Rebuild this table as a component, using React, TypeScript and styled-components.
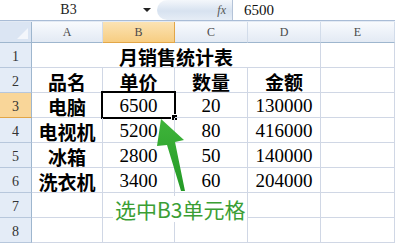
import React from 'react'
import styled, { createGlobalStyle } from 'styled-components'

const GlobalStyle = createGlobalStyle`
  html, body {
    margin: 0;
    padding: 0;
    background: #ffffff;
    overflow: hidden;
  }
`

const COLS = ['A', 'B', 'C', 'D', 'E']
const CN = `'Noto Sans CJK SC', 'Noto Sans', sans-serif`
const NUM = `'Liberation Serif', 'Noto Sans CJK SC', serif`

const rows: { name: string; price: string; qty: string; total: string }[] = [
  { name: '电脑', price: '6500', qty: '20', total: '130000' },
  { name: '电视机', price: '5200', qty: '80', total: '416000' },
  { name: '冰箱', price: '2800', qty: '50', total: '140000' },
  { name: '洗衣机', price: '3400', qty: '60', total: '204000' },
]

const Window = styled.div`
  position: relative;
  width: 395px;
  height: 245px;
  overflow: hidden;
  background: #ffffff;
`

const FormulaBar = styled.div`
  display: flex;
  height: 20px;
  border-bottom: 1px solid #a9bcd6;
  background: #ffffff;
`

const NameBox = styled.div`
  position: relative;
  width: 157px;
  display: flex;
  align-items: center;
  justify-content: center;
  padding-right: 20px;
  box-sizing: border-box;
  font: 14px ${NUM};
  color: #222;
`

const DropArrow = styled.span`
  position: absolute;
  right: 6px;
  top: 8px;
  width: 0;
  height: 0;
  border-left: 4px solid transparent;
  border-right: 4px solid transparent;
  border-top: 4px solid #222;
`

const FxButton = styled.div`
  width: 76px;
  display: flex;
  align-items: center;
  justify-content: flex-end;
  padding-right: 6px;
  box-sizing: border-box;
  border-radius: 10px 0 0 10px;
  background: linear-gradient(#f4f7fb, #d7e2f0 55%, #e6edf6);
  border-right: 1px solid #b4c3d8;
  font: italic 12px ${NUM};
  color: #555;
`

const FormulaInput = styled.div`
  flex: 1;
  display: flex;
  align-items: center;
  padding-left: 11px;
  font: 15px ${NUM};
  color: #111;
`

const Gap = styled.div`
  height: 1px;
  background: #e3eaf4;
`

const Sheet = styled.div`
  display: grid;
  grid-template-columns: 32px 71px 72px 73px 73px 74px;
  grid-template-rows: 21px;
  grid-auto-rows: 25px;
`

const Corner = styled.div`
  position: relative;
  background: #dbe5f3;
  border-right: 1px solid #9eb6ce;
  border-bottom: 1px solid #9eb6ce;
  box-sizing: border-box;
  &::after {
    content: '';
    position: absolute;
    right: 3px;
    bottom: 3px;
    border-left: 11px solid transparent;
    border-bottom: 11px solid #f3f6fb;
  }
`

const ColHead = styled.div<{ $active?: boolean }>`
  display: flex;
  align-items: center;
  justify-content: center;
  box-sizing: border-box;
  border-right: 1px solid ${({ $active }) => ($active ? '#e2a648' : '#d2dcea')};
  border-bottom: 1px solid ${({ $active }) => ($active ? '#e2a648' : '#9eb6ce')};
  background: ${({ $active }) =>
    $active ? 'linear-gradient(#fbe3b4, #f7cd82)' : 'linear-gradient(#f8fafd, #e3eaf4)'};
  font: 12px ${NUM};
  color: #4a4a4a;
`

const RowHead = styled.div<{ $active?: boolean }>`
  display: flex;
  align-items: center;
  justify-content: center;
  padding-top: 3px;
  box-sizing: border-box;
  border-right: 1px solid #9eb6ce;
  border-bottom: 1px solid ${({ $active }) => ($active ? '#e2a648' : '#b7c7dc')};
  background: ${({ $active }) => ($active ? '#f9d699' : '#e4ecf7')};
  font: 14px ${NUM};
  color: #333;
`

const Cell = styled.div<{ $span?: number; $bold?: boolean; $num?: boolean }>`
  position: relative;
  grid-column: span ${({ $span }) => $span ?? 1};
  display: flex;
  align-items: center;
  justify-content: center;
  padding-top: 2px;
  box-sizing: border-box;
  border-right: 1px solid #d0d7e5;
  border-bottom: 1px solid #d0d7e5;
  font-family: ${({ $num }) => ($num ? NUM : CN)};
  font-size: ${({ $num }) => ($num ? '19px' : '19px')};
  font-weight: ${({ $bold }) => ($bold ? 700 : 400)};
  color: #000;
  white-space: nowrap;
`

const Selection = styled.div`
  position: absolute;
  left: -2px;
  top: -2px;
  right: -2px;
  bottom: -2px;
  border: 2px solid #000;
  pointer-events: none;
  &::after {
    content: '';
    position: absolute;
    right: -4px;
    bottom: -4px;
    width: 5px;
    height: 5px;
    background: #000;
    border: 1px solid #fff;
  }
`

const Callout = styled.div`
  position: absolute;
  left: 113px;
  top: 196px;
  padding: 0 2px;
  background: #ffffff;
  font: 21px ${CN};
  line-height: 26px;
  color: #3a9e34;
  white-space: nowrap;
`

const Overlay = styled.svg`
  position: absolute;
  left: 0;
  top: 0;
  pointer-events: none;
`

export default function App() {
  return (
    <Window>
      <GlobalStyle />
      <FormulaBar>
        <NameBox>
          B3
          <DropArrow />
        </NameBox>
        <FxButton>fx</FxButton>
        <FormulaInput>6500</FormulaInput>
      </FormulaBar>
      <Gap />
      <Sheet>
        <Corner />
        {COLS.map((c) => (
          <ColHead key={c} $active={c === 'B'}>
            {c}
          </ColHead>
        ))}

        <RowHead>1</RowHead>
        <Cell $span={4} $bold>
          月销售统计表
        </Cell>
        <Cell />

        <RowHead>2</RowHead>
        <Cell $bold>品名</Cell>
        <Cell $bold>单价</Cell>
        <Cell $bold>数量</Cell>
        <Cell $bold>金额</Cell>
        <Cell />

        {rows.map((r, i) => (
          <React.Fragment key={r.name}>
            <RowHead $active={i === 0}>{i + 3}</RowHead>
            <Cell $bold>{r.name}</Cell>
            <Cell $num>
              {r.price}
              {i === 0 && <Selection />}
            </Cell>
            <Cell $num>{r.qty}</Cell>
            <Cell $num>{r.total}</Cell>
            <Cell />
          </React.Fragment>
        ))}

        {[7, 8].map((n) => (
          <React.Fragment key={n}>
            <RowHead>{n}</RowHead>
            {COLS.map((c) => (
              <Cell key={c} />
            ))}
          </React.Fragment>
        ))}
      </Sheet>

      <Callout>选中B3单元格</Callout>

      <Overlay width="395" height="245" viewBox="0 0 395 245">
        <defs>
          <linearGradient id="arrowFill" x1="0" y1="0" x2="0" y2="1">
            <stop offset="0" stopColor="#3fb43a" />
            <stop offset="1" stopColor="#249a26" />
          </linearGradient>
        </defs>
        <polygon
          points="161,119 184,140 175,142 185,191 181,191 167,145 157,146"
          fill="url(#arrowFill)"
        />
      </Overlay>
    </Window>
  )
}
